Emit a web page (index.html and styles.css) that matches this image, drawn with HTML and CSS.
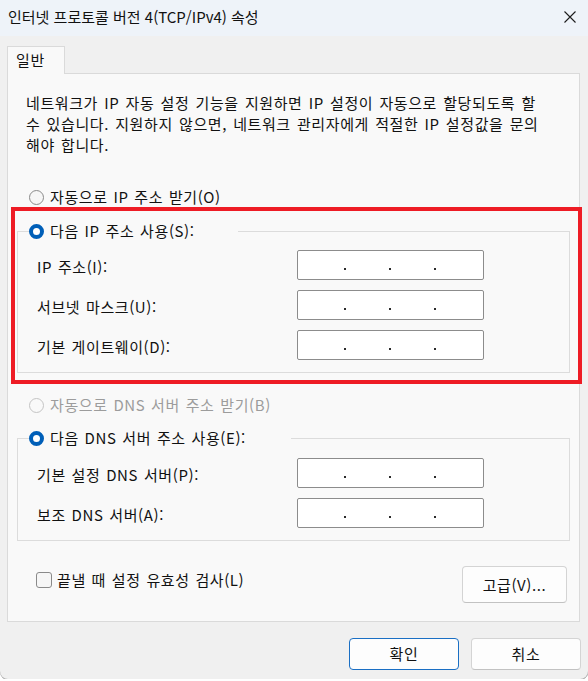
FILE: index.html
```html
<!DOCTYPE html>
<html lang="ko">
<head>
<meta charset="utf-8">
<title>인터넷 프로토콜 버전 4(TCP/IPv4) 속성</title>
<link rel="stylesheet" href="styles.css">
</head>
<body>
<div class="window">
  <div class="titlebar">
    <span class="title">인터넷 프로토콜 버전 4(TCP/IPv4) 속성</span>
    <svg class="close" width="12" height="12" viewBox="0 0 12 12"><path d="M0.5 0.5 L11.5 11.5 M11.5 0.5 L0.5 11.5" stroke="#1c1c1c" stroke-width="1.1" fill="none"/></svg>
  </div>
  <div class="body">
    <div class="tabs"><div class="tab">일반</div></div>
    <div class="panel">
      <p class="desc">
        <span class="line">네트워크가 IP 자동 설정 기능을 지원하면 IP 설정이 자동으로 할당되도록 할</span>
        <span class="line">수 있습니다. 지원하지 않으면, 네트워크 관리자에게 적절한 IP 설정값을 문의</span>
        <span class="line">해야 합니다.</span>
      </p>

      <div class="radio-row first"><span class="radio"></span><span>자동으로 IP 주소 받기(O)</span></div>

      <fieldset class="group g1">
        <legend class="legend l1"><span class="radio checked"></span><span>다음 IP 주소 사용(S):</span></legend>
        <div class="rows">
          <div class="field-row"><span class="label">IP 주소(I):</span><div class="ip"><span class="seg s1"></span><span class="dot"></span><span class="seg"></span><span class="dot"></span><span class="seg"></span><span class="dot"></span></div></div>
          <div class="field-row"><span class="label">서브넷 마스크(U):</span><div class="ip"><span class="seg s1"></span><span class="dot"></span><span class="seg"></span><span class="dot"></span><span class="seg"></span><span class="dot"></span></div></div>
          <div class="field-row"><span class="label">기본 게이트웨이(D):</span><div class="ip"><span class="seg s1"></span><span class="dot"></span><span class="seg"></span><span class="dot"></span><span class="seg"></span><span class="dot"></span></div></div>
        </div>
      </fieldset>

      <div class="radio-row disabled"><span class="radio"></span><span>자동으로 DNS 서버 주소 받기(B)</span></div>

      <fieldset class="group g2">
        <legend class="legend l2"><span class="radio checked"></span><span>다음 DNS 서버 주소 사용(E):</span></legend>
        <div class="rows r2">
          <div class="field-row"><span class="label">기본 설정 DNS 서버(P):</span><div class="ip"><span class="seg s1"></span><span class="dot"></span><span class="seg"></span><span class="dot"></span><span class="seg"></span><span class="dot"></span></div></div>
          <div class="field-row"><span class="label">보조 DNS 서버(A):</span><div class="ip"><span class="seg s1"></span><span class="dot"></span><span class="seg"></span><span class="dot"></span><span class="seg"></span><span class="dot"></span></div></div>
        </div>
      </fieldset>

      <div class="footer">
        <div class="check-row"><span class="checkbox"></span><span>끝낼 때 설정 유효성 검사(L)</span></div>
        <button class="btn advanced">고급(V)...</button>
      </div>
    </div>
    <div class="actions">
      <button class="btn action primary">확인</button>
      <button class="btn action">취소</button>
    </div>
  </div>
  <div class="highlight"></div>
</div>
</body>
</html>
```

FILE: styles.css
```css
* { box-sizing: border-box; }
html, body { margin: 0; padding: 0; background: #ffffff; }
body {
  font-family: "Noto Sans CJK KR", "Noto Sans", sans-serif;
  font-size: 15px;
  color: #111111;
}
.window {
  position: relative;
  width: 588px;
  height: 679px;
  background: #f0f0f0;
  border-radius: 0 0 8px 8px;
  box-shadow: 0 1px 0 #a8a8a8, 1px 0 0 #c8c8c8;
  overflow: hidden;
}
.titlebar {
  height: 36px;
  background: #eef3f9;
  display: flex;
  align-items: center;
  justify-content: space-between;
  padding: 0 12px 0 8px;
}
.title { line-height: 20px; margin-top: -2px; }
.close { display: block; margin-top: -2px; }

.body { padding-top: 10px; }
.tabs { display: flex; padding-left: 7px; }
.tab {
  position: relative;
  z-index: 1;
  width: 58px;
  height: 28px;
  margin-bottom: -1px;
  background: #f9f9f9;
  border: 1px solid #dadada;
  border-bottom: none;
  padding-left: 8px;
  line-height: 25px;
  letter-spacing: 0.6px;
}
.panel {
  margin: 0 8px 0 7px;
  background: #f9f9f9;
  border: 1px solid #dadada;
  padding-bottom: 18px;
  letter-spacing: 0.6px;
  word-spacing: 1px;
}
.desc {
  margin: 18px 0 0 18px;
  line-height: 21px;
  word-spacing: 1.4px;
}
.desc .line { display: block; white-space: nowrap; }

.radio-row, .legend, .check-row {
  display: flex;
  align-items: center;
  gap: 6px;
  height: 20px;
  line-height: 20px;
  white-space: nowrap;
}
.radio-row { margin-left: 21px; }
.radio-row.first { margin-top: 32px; }
.radio-row.disabled { margin-top: 22px; color: #9c9c9c; }
.radio {
  flex: none;
  width: 15px;
  height: 15px;
  border-radius: 50%;
  border: 1px solid #8a8a8a;
  background: #f6f6f6;
}
.radio-row.disabled .radio { border-color: #c4c4c4; background: #f9f9f9; }
.radio.checked {
  border: 4.5px solid #005fb8;
  background: #ffffff;
}

.group {
  margin: 14px 9px 0 9px;
  padding: 0 0 12px 0;
  border: 1px solid #dcdcdc;
  min-width: 0;
}
.g2 { margin-top: 13px; }
.legend {
  padding: 0;
  margin-left: 11px;
}
.l1 { width: 209px; }
.l2 { width: 262px; }
.rows {
  display: flex;
  flex-direction: column;
  gap: 10px;
  padding-top: 9px;
}
.rows.r2 { padding-top: 10px; }
.field-row {
  display: flex;
  align-items: center;
  height: 30px;
  padding-left: 19px;
}
.label { width: 260px; flex: none; line-height: 20px; margin-top: 3px; white-space: nowrap; }
.ip {
  flex: none;
  width: 187px;
  height: 30px;
  background: #ffffff;
  border: 1px solid #8c8c8c;
  border-radius: 2px;
  display: flex;
  align-items: flex-start;
}
.seg { width: 43px; flex: none; }
.seg.s1 { width: 46px; }
.dot {
  flex: none;
  width: 2px;
  height: 2px;
  margin-top: 17px;
  background: #2a2a2a;
}

.footer {
  display: flex;
  justify-content: space-between;
  align-items: flex-start;
  margin: 25px 12px 0 28px;
}
.check-row { margin-top: 6px; height: 16px; gap: 5px; }
.checkbox {
  flex: none;
  width: 16px;
  height: 16px;
  border: 1px solid #8a8a8a;
  border-radius: 3px;
  background: #f6f6f6;
}
.btn {
  font-family: "Noto Sans CJK KR", "Noto Sans", sans-serif;
  font-size: 15px;
  color: #111111;
  background: #fdfdfd;
  border: 1px solid #d4d4d4;
  border-bottom-color: #c2c2c2;
  border-radius: 4px;
  padding: 0;
  line-height: 20px;
  letter-spacing: 0.6px;
}
.advanced { width: 105px; height: 37px; }
.actions {
  display: flex;
  justify-content: flex-end;
  gap: 12px;
  padding-right: 7px;
  margin-top: 16px;
}
.action { width: 110px; height: 32px; }
.primary { border: 1px solid #1a6fc4; }

.highlight {
  position: absolute;
  left: 11px;
  top: 207px;
  width: 571px;
  height: 177px;
  border: 4px solid #ee1c25;
  pointer-events: none;
}
```
